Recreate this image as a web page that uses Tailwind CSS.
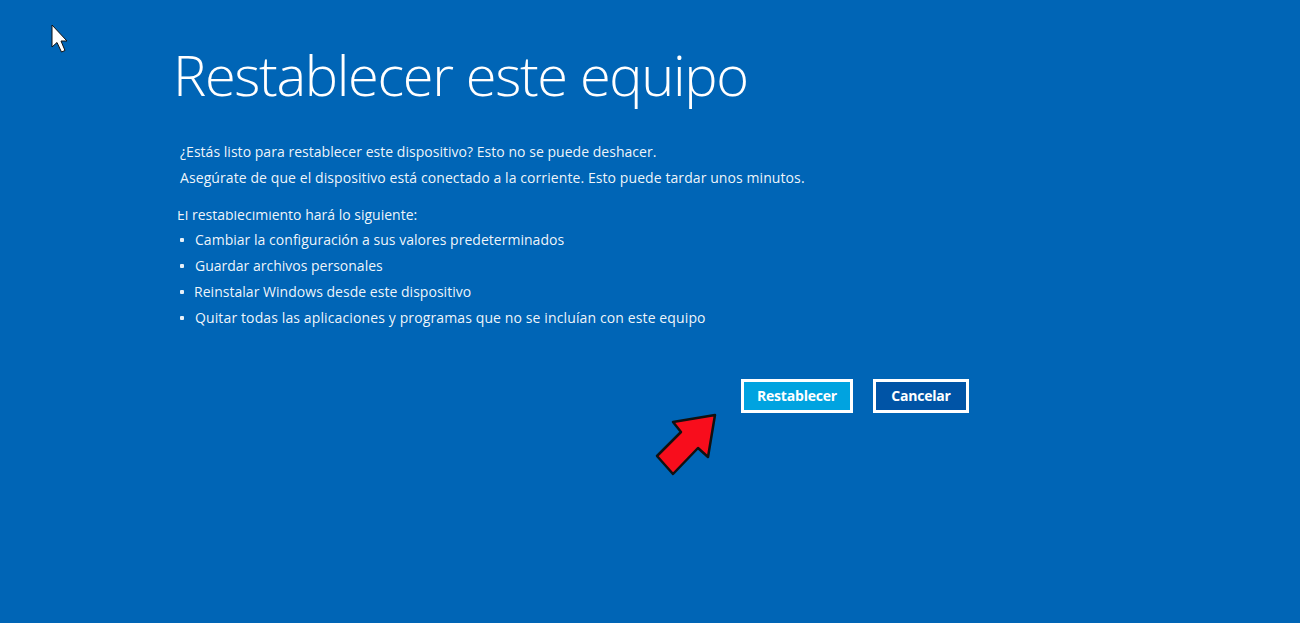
<!DOCTYPE html>
<html lang="es">
<head>
    <meta charset="UTF-8">
    <title>Restablecer este equipo</title>
    <script src="https://cdn.jsdelivr.net/npm/@tailwindcss/browser@4"></script>
</head>
<body class="bg-[#0065b6] h-[623px] overflow-hidden relative text-white font-['Open_Sans',sans-serif]">

    <!-- cursor -->
    <svg class="absolute left-[50px] top-[24px]" width="20" height="30" viewBox="0 0 20 30">
        <path d="M2 1 V23 L7 18.5 L11.5 28 L15 26.5 L11 17 H17 Z" fill="#fff" stroke="#111" stroke-width="1"/>
    </svg>

    <main class="pl-[173px] pt-[38px]">
        <h1 class="text-[56px] leading-[72px] font-light tracking-[-1.35px]">Restablecer este equipo</h1>

        <div class="mt-[29px] pl-[7px] text-[14px] leading-[26px] text-white/95">
            <p class="tracking-[0.03px]">¿Estás listo para restablecer este dispositivo? Esto no se puede deshacer.</p>
            <p class="tracking-[0.085px]">Asegúrate de que el dispositivo está conectado a la corriente. Esto puede tardar unos minutos.</p>
        </div>

        <div class="mt-[11px] pl-[4px] text-[14px] leading-[26px] text-white/95">
            <!-- the capture hides the top of the first two words -->
            <p class="relative h-[25px]">El restablecimiento hará lo siguiente:<span class="absolute left-0 top-[2px] w-[125px] h-[7px] bg-[#0065b6]"></span></p>
            <ul>
                <li class="flex items-center"><span class="w-[4px] h-[4px] rounded-[1px] bg-white/90 ml-[3px] mr-[11px]"></span><span class="tracking-[0.03px]">Cambiar la configuración a sus valores predeterminados</span></li>
                <li class="flex items-center"><span class="w-[4px] h-[4px] rounded-[1px] bg-white/90 ml-[3px] mr-[11px]"></span><span>Guardar archivos personales</span></li>
                <li class="flex items-center"><span class="w-[4px] h-[4px] rounded-[1px] bg-white/90 ml-[3px] mr-[10px]"></span><span class="tracking-[0.03px]">Reinstalar Windows desde este dispositivo</span></li>
                <li class="flex items-center"><span class="w-[4px] h-[4px] rounded-[1px] bg-white/90 ml-[3px] mr-[11px]"></span><span class="tracking-[0.12px]">Quitar todas las aplicaciones y programas que no se incluían con este equipo</span></li>
            </ul>
        </div>

        <div class="mt-[48px] w-[796px] flex justify-end gap-[20px] text-[14px] font-bold tracking-[-0.2px]">
            <button class="w-[112px] h-[34px] pb-[1px] bg-[#00a3e0] border-[3px] border-white">Restablecer</button>
            <button class="w-[96px] h-[34px] pb-[1px] bg-[#0054a6] border-[3px] border-white">Cancelar</button>
        </div>
    </main>

    <!-- red arrow -->
    <svg class="absolute left-[650px] top-[410px]" width="72" height="70" viewBox="0 0 72 70">
        <path d="M65 5 L58 47 L48 38 L23 64 L7 46 L31 22 L23 12 Z" fill="#f80d1c" stroke="#111" stroke-width="2.5" stroke-linejoin="round"/>
    </svg>

</body>
</html>
